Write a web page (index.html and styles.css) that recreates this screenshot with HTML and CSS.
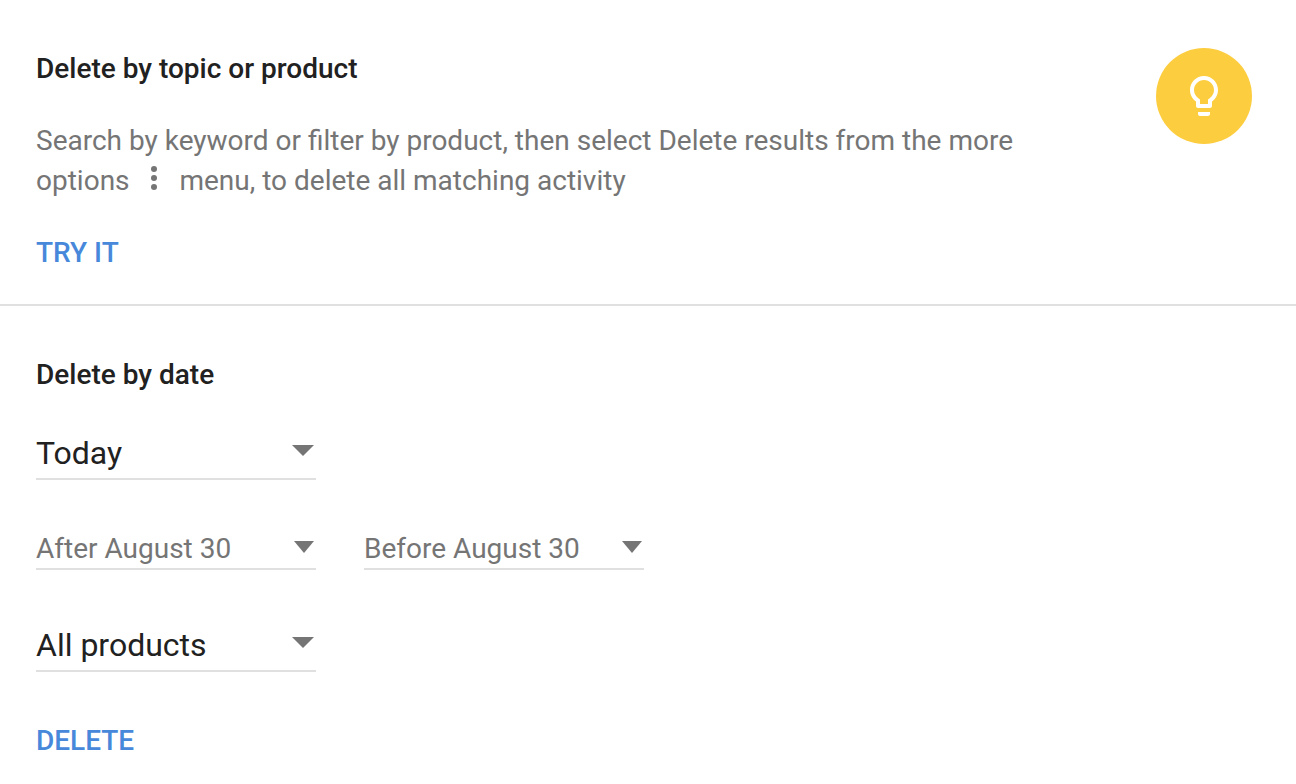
FILE: index.html
```html
<!DOCTYPE html>
<html lang="en">
<head>
    <meta charset="UTF-8">
    <meta name="viewport" content="width=device-width, initial-scale=1.0">
    <title>Delete activity</title>
    <link rel="stylesheet" href="styles.css">
</head>
<body>
    <section class="panel topic">
        <div class="topic-text">
            <h2>Delete by topic or product</h2>
            <p>Search by keyword or filter by product, then select Delete results from the more options
                <svg class="more-icon" viewBox="0 0 8 26" aria-hidden="true">
                    <circle cx="4" cy="4" r="3"/>
                    <circle cx="4" cy="13" r="3"/>
                    <circle cx="4" cy="22" r="3"/>
                </svg>
                menu, to delete all matching activity</p>
            <button type="button" class="action">TRY IT</button>
        </div>
        <div class="tip">
            <svg viewBox="0 0 24 24" aria-hidden="true">
                <path d="M9 21c0 .55.45 1 1 1h4c.55 0 1-.45 1-1v-1H9v1zm3-19C8.14 2 5 5.14 5 9c0 2.38 1.19 4.47 3 5.74V17c0 .55.45 1 1 1h6c.55 0 1-.45 1-1v-2.26c1.81-1.27 3-3.36 3-5.74 0-3.86-3.14-7-7-7zm2.85 11.1l-.85.6V16h-4v-2.3l-.85-.6C7.8 12.16 7 10.63 7 9c0-2.76 2.24-5 5-5s5 2.24 5 5c0 1.63-.8 3.16-2.15 4.1z"/>
            </svg>
        </div>
    </section>

    <form class="panel date">
        <h2>Delete by date</h2>
        <div class="field large">
            <select aria-label="Date range">
                <option>Today</option>
                <option>Yesterday</option>
                <option>All time</option>
            </select>
        </div>
        <div class="range">
            <div class="field">
                <select aria-label="After">
                    <option>After August 30</option>
                </select>
            </div>
            <div class="field">
                <select aria-label="Before">
                    <option>Before August 30</option>
                </select>
            </div>
        </div>
        <div class="field large">
            <select aria-label="Product">
                <option>All products</option>
            </select>
        </div>
        <button type="button" class="action">DELETE</button>
    </form>
</body>
</html>
```

FILE: styles.css
```css
* {
    box-sizing: border-box;
}
body {
    margin: 0;
    background-color: #fff;
    color: #212121;
    font-family: Roboto, Arial, sans-serif;
    font-size: 28px;
    line-height: 40px;
}
.panel {
    padding: 48px 44px 30px 36px;
}
h2 {
    margin: 0;
    font-size: 28px;
    font-weight: 500;
    line-height: 42px;
}
.topic {
    display: flex;
    justify-content: space-between;
    align-items: flex-start;
    border-bottom: 2px solid #e0e0e0;
}
.topic-text {
    max-width: 1000px;
}
.topic p {
    margin: 31px 0;
    color: #757575;
}
.more-icon {
    width: 8px;
    height: 26px;
    margin: 0 15px 0 13px;
    vertical-align: -1px;
    fill: #757575;
}
.action {
    display: block;
    padding: 0;
    border: none;
    background: none;
    color: #4788db;
    font-family: inherit;
    font-size: 28px;
    font-weight: 500;
    line-height: 42px;
    cursor: pointer;
}
.tip {
    display: flex;
    flex-shrink: 0;
    justify-content: center;
    align-items: center;
    width: 96px;
    height: 96px;
    border-radius: 50%;
    background-color: #fdcd40;
}
.tip svg {
    width: 48px;
    height: 48px;
    fill: #fff;
}
.date {
    display: flex;
    flex-direction: column;
    align-items: flex-start;
}
.field {
    position: relative;
    width: 280px;
    border-bottom: 2px solid #e0e0e0;
}
.field::after {
    content: "";
    position: absolute;
    top: 13px;
    right: 2px;
    border-top: 12px solid #757575;
    border-left: 10px solid transparent;
    border-right: 10px solid transparent;
    pointer-events: none;
}
.field select {
    display: block;
    width: 100%;
    height: 40px;
    padding: 0;
    border: none;
    background: none;
    color: #757575;
    font-family: inherit;
    font-size: 28px;
    appearance: none;
}
.large {
    margin-top: 30px;
}
.large::after {
    top: 19px;
    border-top-width: 11px;
    border-left-width: 11px;
    border-right-width: 11px;
}
.field.large select {
    height: 52px;
    padding-top: 2px;
    color: #212121;
    font-size: 32px;
}
.range {
    display: flex;
    gap: 48px;
    margin-top: 48px;
}
.range + .large {
    margin-top: 48px;
}
.date .action {
    margin-top: 48px;
}
```
